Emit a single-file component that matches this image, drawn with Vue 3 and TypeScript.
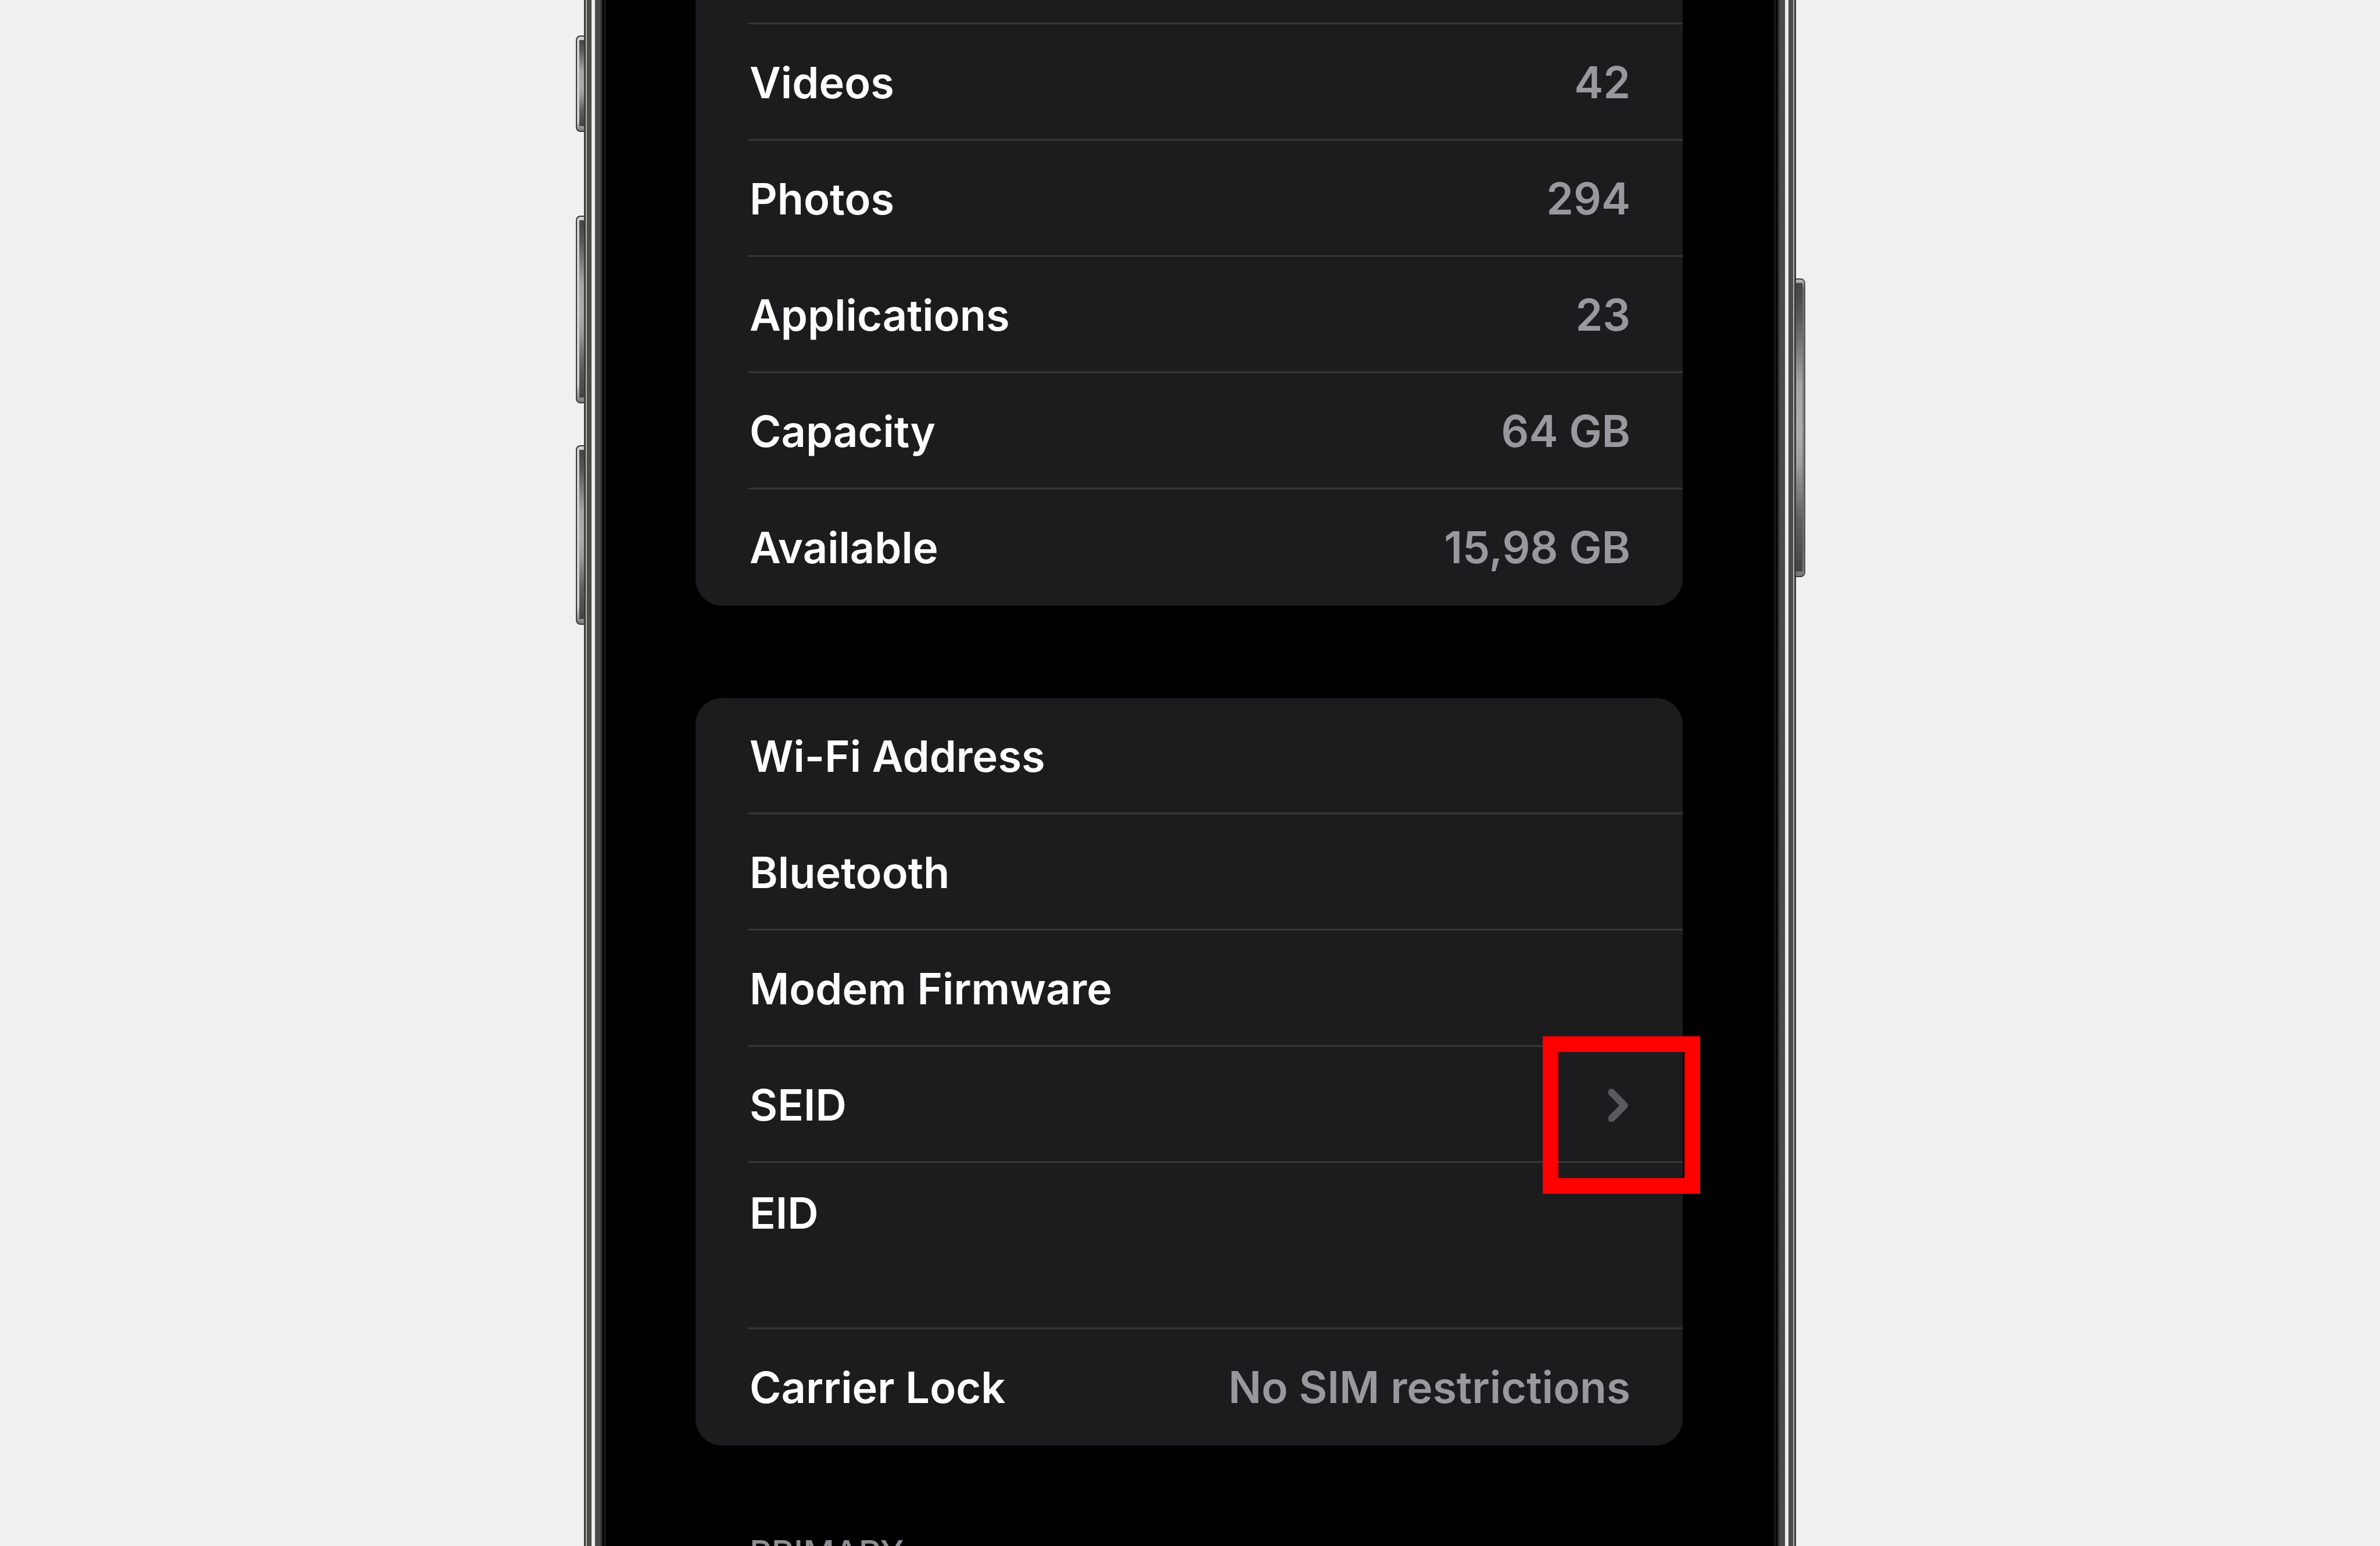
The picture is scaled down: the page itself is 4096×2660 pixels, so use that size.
<script setup lang="ts">
interface Row {
  label: string
  value?: string
  link?: boolean
  tall?: boolean
}

const storage: Row[] = [
  { label: 'Videos', value: '42' },
  { label: 'Photos', value: '294' },
  { label: 'Applications', value: '23' },
  { label: 'Capacity', value: '64 GB' },
  { label: 'Available', value: '15,98 GB' },
]

const network: Row[] = [
  { label: 'Wi-Fi Address' },
  { label: 'Bluetooth' },
  { label: 'Modem Firmware' },
  { label: 'SEID', link: true },
  { label: 'EID', tall: true },
  { label: 'Carrier Lock', value: 'No SIM restrictions' },
]
</script>

<template>
  <main class="stage">
    <div class="phone">
      <i class="key key-left key-action"></i>
      <i class="key key-left key-up"></i>
      <i class="key key-left key-down"></i>
      <i class="key key-right key-power"></i>
      <div class="edge"></div>
      <div class="screen">
        <ul class="card card-continued">
          <li class="row row-stub"><div class="line"></div></li>
          <li v-for="row in storage" :key="row.label" class="row">
            <div class="line">
              <span class="label">{{ row.label }}</span>
              <span class="value">{{ row.value }}</span>
            </div>
          </li>
        </ul>
        <ul class="card">
          <li v-for="row in network" :key="row.label" class="row" :class="{ 'row-tall': row.tall }">
            <button v-if="row.link" type="button" class="line">
              <span class="label">{{ row.label }}</span>
              <svg class="chevron" viewBox="0 0 38 58" aria-hidden="true">
                <path d="M5.5 7.5 27.5 30 5.5 52.5" />
              </svg>
            </button>
            <div v-else class="line">
              <span class="label">{{ row.label }}</span>
              <span v-if="row.value" class="value">{{ row.value }}</span>
            </div>
            <div v-if="row.link" class="marker"></div>
          </li>
        </ul>
        <h2 class="section">PRIMARY</h2>
      </div>
      <div class="edge edge-right"></div>
    </div>
  </main>
</template>

<style>
body {
  margin: 0;
  background: #f0f0f0;
}
</style>

<style scoped>
.stage {
  display: flex;
  justify-content: center;
  height: 100vh;
  overflow: hidden;
  background: #f0f0f0;
  font-family: Inter, "Liberation Sans", sans-serif;
  font-size: 74px;
  font-weight: 600;
  line-height: 92px;
}

.phone {
  position: relative;
  display: flex;
  width: 100%;
  max-width: 2086px;
  background: #000;
}

.edge {
  flex: none;
  width: 38px;
  background: linear-gradient(
    to right,
    #3b3b3b 0 3px,
    #b2b2b0 3px 5px,
    #4b4b49 5px 13px,
    #ececec 13px 19px,
    #4a4a4a 19px 28px,
    #2c2c2c 30px,
    #050505 33px 35px,
    #1a1a1a 35px 38px
  );
}

.edge-right {
  transform: scaleX(-1);
}

.screen {
  flex: 1;
  min-width: 0;
  padding: 0 157px 0 154px;
}

.card {
  margin: 0 0 159px;
  padding: 0;
  list-style: none;
  background: #1c1c1e;
  border-radius: 46px;
}

.card-continued {
  border-top-left-radius: 0;
  border-top-right-radius: 0;
}

.row {
  position: relative;
  display: flex;
  box-sizing: border-box;
  height: 200px;
  padding-left: 91px;
}

.row-stub {
  height: 42px;
}

.row-tall {
  height: 286px;
}

.line {
  flex: 1;
  display: flex;
  align-items: center;
  justify-content: space-between;
  box-sizing: border-box;
  margin: 0;
  padding: 2px 90px 0 2px;
  border: 0;
  border-bottom: 3px solid #363638;
  background: none;
  color: inherit;
  font: inherit;
  text-align: left;
}

.row:last-child .line {
  border-bottom-color: transparent;
}

.row-tall .line {
  align-items: flex-start;
  padding-top: 40px;
}

.label {
  color: #fff;
}

.value {
  color: #98989f;
  font-size: 75px;
}

.chevron {
  width: 38px;
  height: 58px;
  fill: none;
  stroke: #5a5a5e;
  stroke-width: 12.5;
  stroke-linecap: round;
  stroke-linejoin: round;
}

.marker {
  position: absolute;
  z-index: 1;
  top: -18px;
  right: -30px;
  box-sizing: border-box;
  width: 271px;
  height: 271px;
  border: 27px solid #f00;
  pointer-events: none;
}

.section {
  margin: -10px 0 0;
  padding-left: 93px;
  color: #8d8d93;
  font-size: 59px;
  font-weight: 500;
  line-height: 72px;
}

.key {
  position: absolute;
  box-sizing: border-box;
  border: 2px solid #3a3a3a;
}

.key::before {
  content: "";
  position: absolute;
  inset: 0;
  background: linear-gradient(#444, #5a5a5a 12%, #a6a6a6 36%, #adadad 52%, #a0a0a0 62%, #606060 82%, #444);
}

.key-left {
  right: 100%;
  width: 14px;
  border-right: 0;
  border-radius: 8px 0 0 8px;
  background: linear-gradient(#d0d0d0 90%, #7a7a7a);
}

.key-left::before {
  top: 6px;
  bottom: 8px;
  left: 4px;
}

.key-right {
  left: 100%;
  width: 16px;
  border-left: 0;
  border-right-color: #555;
  border-radius: 0 8px 8px 0;
  background: linear-gradient(#c0c0c0, #666 3%, #888 50%, #666 90%, #7a7a7a);
}

.key-right::before {
  top: 6px;
  right: 3px;
  bottom: 8px;
}

.key-action {
  top: 61px;
  height: 166px;
}

.key-up {
  top: 371px;
  height: 323px;
}

.key-down {
  top: 766px;
  height: 309px;
}

.key-power {
  top: 479px;
  height: 514px;
}
</style>
